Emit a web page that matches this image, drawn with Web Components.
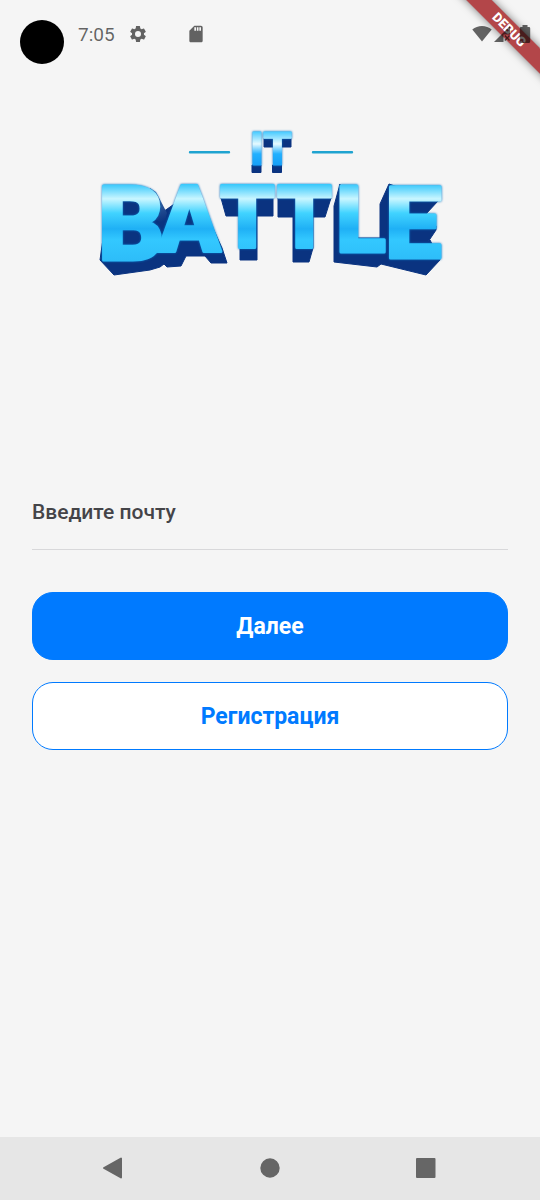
<!DOCTYPE html>
<html lang="ru">
<head>
<meta charset="utf-8">
<meta name="viewport" content="width=device-width, initial-scale=1">
<title>IT Battle</title>
<style>
    body {
        margin: 0;
        background: #f5f5f5;
        font-family: Roboto, "Liberation Sans", sans-serif;
        --accent: #007aff;
        --icon: rgba(0, 0, 0, 0.6);
        --text: #444448;
    }
</style>
</head>
<body>
<app-screen>
    <status-bar slot="status" time="7:05"></status-bar>
    <debug-banner slot="banner">DEBUG</debug-banner>
    <battle-logo></battle-logo>
    <login-form>
        <text-field type="email">Введите почту</text-field>
        <app-button>Далее</app-button>
        <app-button variant="outlined">Регистрация</app-button>
    </login-form>
    <nav-bar slot="nav"></nav-bar>
</app-screen>

<script>
/**
 * Base class: attaches an open shadow root filled with the subclass markup.
 */
class BaseElement extends HTMLElement {
    constructor() {
        super();
        this.attachShadow({ mode: 'open' });
        this.shadowRoot.innerHTML = this.render();
    }

    render() {
        return '<slot></slot>';
    }
}

/**
 * Full-height page: status bar on top, content, navigation at the bottom.
 * @element app-screen
 */
class AppScreen extends BaseElement {
    render() {
        return `
            <style>
                :host {
                    display: flex;
                    flex-direction: column;
                    position: relative;
                    min-height: 100vh;
                    overflow: hidden;
                }
                main {
                    flex: 1;
                    display: flex;
                    flex-direction: column;
                    gap: 196px;
                    padding: 60px 32px;
                }
            </style>
            <slot name="banner"></slot>
            <slot name="status"></slot>
            <main><slot></slot></main>
            <slot name="nav"></slot>
        `;
    }
}
customElements.define('app-screen', AppScreen);

/**
 * System status bar with the camera cutout, the clock and the indicators.
 * @element status-bar
 */
class StatusBar extends BaseElement {
    render() {
        return `
            <style>
                :host {
                    display: flex;
                    align-items: center;
                    position: relative;
                    z-index: 2;
                    height: 68px;
                    padding: 0 8px 0 20px;
                    box-sizing: border-box;
                    color: var(--icon);
                }
                .cutout {
                    width: 44px;
                    height: 44px;
                    margin: 15px 14px 0 0;
                    border-radius: 50%;
                    background: #000;
                }
                time {
                    padding-top: 2px;
                    font-size: 19px;
                    line-height: 24px;
                }
                svg {
                    display: block;
                    fill: currentColor;
                }
                .left, .right {
                    display: flex;
                    align-items: center;
                }
                .left {
                    flex: 1;
                    gap: 38px;
                    margin-left: 13px;
                }
                .right {
                    gap: 2px;
                }
            </style>
            <span class="cutout"></span>
            <time></time>
            <span class="left">
                <svg width="20" height="20" viewBox="0 0 24 24"><path d="M19.14 12.94c.04-.3.06-.61.06-.94 0-.32-.02-.64-.07-.94l2.03-1.58a.49.49 0 0 0 .12-.61l-1.92-3.32a.488.488 0 0 0-.59-.22l-2.39.96c-.5-.38-1.03-.7-1.62-.94l-.36-2.54a.484.484 0 0 0-.48-.41h-3.84c-.24 0-.43.17-.47.41l-.36 2.54c-.59.24-1.13.57-1.62.94l-2.39-.96c-.22-.08-.47 0-.59.22L2.74 8.87c-.12.21-.08.47.12.61l2.03 1.58c-.05.3-.09.63-.09.94s.02.64.07.94l-2.03 1.58a.49.49 0 0 0-.12.61l1.92 3.32c.12.22.37.29.59.22l2.39-.96c.5.38 1.03.7 1.62.94l.36 2.54c.05.24.24.41.48.41h3.84c.24 0 .44-.17.47-.41l.36-2.54c.59-.24 1.13-.56 1.62-.94l2.39.96c.22.08.47 0 .59-.22l1.92-3.32c.12-.22.07-.47-.12-.61l-2.01-1.58zM12 15.6A3.6 3.6 0 1 1 12 8.4a3.6 3.6 0 0 1 0 7.2z"/></svg>
                <svg width="20" height="20" viewBox="0 0 24 24"><path d="M18 2h-8L4.020 8 4 20c0 1.100.9 2 2 2h12c1.100 0 2-.9 2-2V4c0-1.100-.9-2-2-2zm-6 6h-2V4h2v4zm3 0h-2V4h2v4zm3 0h-2V4h2v4z"/></svg>
            </span>
            <span class="right">
                <svg width="20" height="16" viewBox="0 0 20 16"><path d="M10 15.500 0.300 3.600C3 1.200 6.400 0 10 0s7 1.200 9.700 3.600z"/></svg>
                <svg width="16" height="16" viewBox="0 0 16 16"><path d="M0 16 16 0v8.500H9.500V16zM10.300 10l1.200-1 1.700 1.900L15 9l1 1-1.800 2 1.800 2-1 1-1.800-1.900L11.500 15l-1.200-1 1.800-2z"/></svg>
                <svg width="20" height="18" viewBox="2 0 20 18"><path d="M12.500 0h5v2H19a1.200 1.200 0 0 1 1.200 1.200v13.300A1.300 1.300 0 0 1 19 18h-8a1.300 1.300 0 0 1-1.200-1.500V3.200A1.200 1.200 0 0 1 11 2h1.500z"/></svg>
            </span>
        `;
    }

    connectedCallback() {
        this.shadowRoot.querySelector('time').textContent = this.getAttribute('time');
    }
}
customElements.define('status-bar', StatusBar);

/**
 * Diagonal ribbon over the top right corner.
 * @element debug-banner
 */
class DebugBanner extends BaseElement {
    render() {
        return `
            <style>
                :host {
                    position: absolute;
                    top: 21px;
                    right: -49px;
                    z-index: 1;
                    width: 160px;
                    transform: rotate(45deg);
                    background: rgba(160, 20, 24, 0.78);
                    box-shadow: 0 0 8px rgba(0, 0, 0, 0.5);
                    color: #fff;
                    font-size: 13px;
                    font-weight: 900;
                    line-height: 18px;
                    text-align: center;
                }
            </style>
            <slot></slot>
        `;
    }
}
customElements.define('debug-banner', DebugBanner);

/**
 * Game logo: gradient lettering standing on dark extruded sides.
 * @element battle-logo
 */
class BattleLogo extends BaseElement {
    render() {
        return `
            <style>
                :host {
                    display: flex;
                    justify-content: center;
                }
                svg {
                    width: 344px;
                    max-width: 100%;
                    height: auto;
                    overflow: visible;
                }
                text {
                    font-family: Roboto, sans-serif;
                    font-weight: 900;
                    stroke-linejoin: round;
                    filter: drop-shadow(0 0 1px #0a6fc0);
                }
                .small {
                    fill: url(#small);
                    stroke: url(#small);
                    stroke-width: 1;
                }
                .big {
                    fill: url(#big);
                    stroke: url(#big);
                    stroke-width: 3;
                }
            </style>
            <svg viewBox="98 128 344 150">
                <defs>
                    <linearGradient id="small" gradientUnits="userSpaceOnUse" x1="0" y1="131" x2="0" y2="168">
                        <stop offset="0" stop-color="#3fc8ff"/>
                        <stop offset="0.350" stop-color="#e6faff"/>
                        <stop offset="0.620" stop-color="#22b0ff"/>
                        <stop offset="1" stop-color="#149cf5"/>
                    </linearGradient>
                    <linearGradient id="big" gradientUnits="userSpaceOnUse" x1="0" y1="183" x2="0" y2="262">
                        <stop offset="0" stop-color="#2bc4fb"/>
                        <stop offset="0.200" stop-color="#c9f6ff"/>
                        <stop offset="0.380" stop-color="#41d3ff"/>
                        <stop offset="0.580" stop-color="#1fb0f5"/>
                        <stop offset="0.720" stop-color="#33c8ff"/>
                        <stop offset="1" stop-color="#2dbcf8"/>
                    </linearGradient>
                    <linearGradient id="side" gradientUnits="userSpaceOnUse" x1="150" y1="185" x2="162" y2="222">
                        <stop offset="0" stop-color="#5a86b8"/>
                        <stop offset="1" stop-color="#0a3380"/>
                    </linearGradient>
                </defs>
                <path d="M190 152.300h39M313 152.300h39" stroke="#1fa3d0" stroke-width="2.400" stroke-linecap="round"/>
                <g fill="#0a3380" stroke="#0a3380" stroke-linejoin="round">
                    <path d="M252 165h9v7.500h-9zM264 138h9v9h-9zM272.500 165h9v7.500h-9zM281 138h10v9h-10z"/>
                    <path d="M100 260 114 275 150 270 160 267 164 264 167 267 181 266 186 256 205 256 211 263 227 263 222 248 200 200 180 200 160 214 145 190 110 190z"/>
                    <path d="M221 198 226 216H240V260H257V216H273V198z"/>
                    <path d="M278 198V217H293V262H309L313 248V217H325L331 198z"/>
                    <path d="M340 184 334 206V262L377 267 381 264 426 275 440 260 430 240 428 242 436 230V226L426 214 438 201 389 184 380 204V238H340z"/>
                </g>
                <path d="M150 188 156 192 167 213 164 225 150 215z" fill="url(#side)"/>
                <text class="small" font-size="46" y="165"><tspan x="250">I</tspan><tspan x="263">T</tspan></text>
                <text class="big">
                    <tspan x="98" y="260" font-size="103">B</tspan><tspan x="158" y="251" font-size="92">A</tspan><tspan x="220" y="248" font-size="87">T</tspan><tspan x="277" y="248" font-size="87">T</tspan><tspan x="336" y="252" font-size="92">L</tspan><tspan x="385" y="258" font-size="101">E</tspan>
                </text>
            </svg>
        `;
    }
}
customElements.define('battle-logo', BattleLogo);

/**
 * Vertical stack of the field and the actions.
 * @element login-form
 */
class LoginForm extends BaseElement {
    render() {
        return `
            <style>
                :host {
                    display: flex;
                    flex-direction: column;
                    gap: 22px;
                }
            </style>
            <slot></slot>
        `;
    }
}
customElements.define('login-form', LoginForm);

/**
 * Underlined text input, the label lies inside while the field is empty.
 * @element text-field
 */
class TextField extends BaseElement {
    render() {
        return `
            <style>
                :host {
                    display: grid;
                    margin-bottom: 20px;
                    color: var(--text);
                    font-size: 21px;
                    font-weight: 500;
                    line-height: 28px;
                }
                input, label {
                    grid-area: 1 / 1;
                }
                input {
                    min-width: 0;
                    padding: 24px 0 23px;
                    border: 0;
                    border-bottom: 1px solid #d8d8da;
                    border-radius: 0;
                    outline: 0;
                    background: none;
                    color: inherit;
                    font: inherit;
                }
                input:focus {
                    border-color: var(--accent);
                }
                label {
                    padding: 24px 0 23px;
                    pointer-events: none;
                }
                input:not(:placeholder-shown) + label {
                    visibility: hidden;
                }
            </style>
            <input id="field" placeholder=" ">
            <label for="field"><slot></slot></label>
        `;
    }

    connectedCallback() {
        this.shadowRoot.querySelector('input').type = this.getAttribute('type') || 'text';
    }
}
customElements.define('text-field', TextField);

/**
 * Wide rounded button, filled by default or variant="outlined".
 * @element app-button
 */
class AppButton extends BaseElement {
    render() {
        return `
            <style>
                :host {
                    display: block;
                }
                button {
                    display: block;
                    width: 100%;
                    padding: 20px 16px 18px;
                    border: 1px solid var(--accent);
                    border-radius: 21px;
                    background: var(--accent);
                    color: #fff;
                    font-family: inherit;
                    font-size: 23px;
                    font-weight: 700;
                    line-height: 28px;
                    cursor: pointer;
                }
                :host([variant="outlined"]) button {
                    background: #fff;
                    color: var(--accent);
                }
            </style>
            <button type="button"><slot></slot></button>
        `;
    }
}
customElements.define('app-button', AppButton);

/**
 * System navigation: back, home, recents.
 * @element nav-bar
 */
class NavBar extends BaseElement {
    render() {
        return `
            <style>
                :host {
                    display: flex;
                    padding: 0 35px;
                    background: #e6e6e6;
                }
                button {
                    flex: 1;
                    display: flex;
                    justify-content: center;
                    padding: 20px 0 21px;
                    border: 0;
                    background: none;
                    color: #666;
                }
                svg {
                    fill: currentColor;
                    stroke: currentColor;
                    stroke-width: 2;
                    stroke-linejoin: round;
                }
            </style>
            <button type="button" aria-label="Назад"><svg width="22" height="22" viewBox="0 0 22 22"><path d="M19 1.500v19L2 11z"/></svg></button>
            <button type="button" aria-label="Домой"><svg width="22" height="22" viewBox="0 0 22 22"><circle cx="11" cy="11" r="8.700"/></svg></button>
            <button type="button" aria-label="Недавние"><svg width="22" height="22" viewBox="0 0 22 22"><path d="M1 2h17.500v18H1z"/></svg></button>
        `;
    }
}
customElements.define('nav-bar', NavBar);
</script>
</body>
</html>
